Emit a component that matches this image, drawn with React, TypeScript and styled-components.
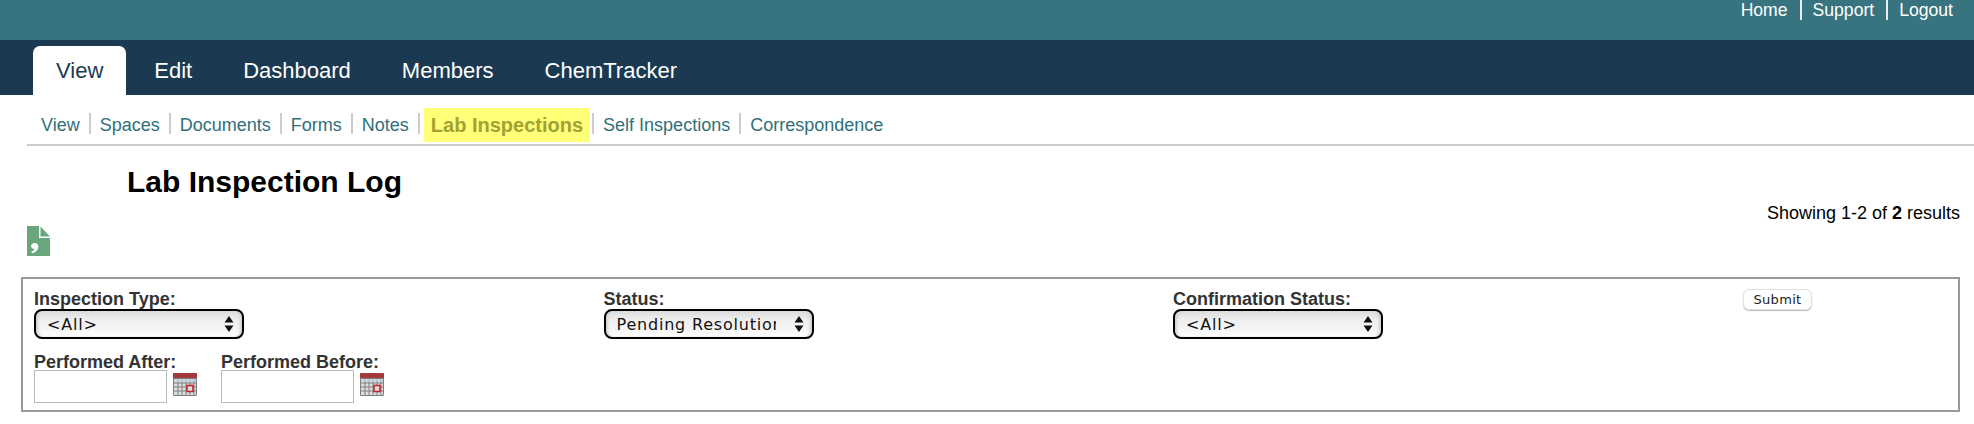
import styled, { createGlobalStyle } from 'styled-components';

const mainTabs = ['View', 'Edit', 'Dashboard', 'Members', 'ChemTracker'];
const subLinks = ['View', 'Spaces', 'Documents', 'Forms', 'Notes', 'Lab Inspections', 'Self Inspections', 'Correspondence'];

const Arrows = () => (
  <ArrowIcon width="10" height="18" viewBox="0 0 10 18">
    <path d="M5 1 9.5 7.5H.5z M5 17 .5 10.5h9z" fill="#111" />
  </ArrowIcon>
);

const DropDown = ({ value, options }: { value: string; options: string[] }) => (
  <SelectWrap>
    <Select defaultValue={value}>
      {options.map((o) => (
        <option key={o}>{o}</option>
      ))}
    </Select>
    <Arrows />
  </SelectWrap>
);

const CalendarIcon = () => (
  <CalendarSvg width="24" height="23" viewBox="0 0 24 23">
    <rect x="0" y="0" width="24" height="23" rx="1.5" fill="#7d7d7d" />
    <rect x="0" y="0" width="24" height="5" rx="1" fill="#a33a3a" />
    <rect x="1" y="6" width="22" height="16" fill="#dcdee0" />
    <path d="M1 10h22M1 14h22M1 18h22M5 6v16M9 6v16M13 6v16M17 6v16M21 6v16" stroke="#808080" strokeWidth="1" />
    <rect x="1" y="6" width="22" height="3" fill="#c4d3e2" opacity="0.6" />
    <rect x="14" y="12.500" width="6" height="6" fill="#ddd" stroke="#c0282c" strokeWidth="1.6" />
  </CalendarSvg>
);

const DateField = ({ label }: { label: string }) => (
  <DateGroup>
    <DateLabel>{label}</DateLabel>
    <DateRow>
      <DateInput type="text" />
      <CalendarIcon />
    </DateRow>
  </DateGroup>
);

const App = () => (
  <>
    <GlobalStyle />
    <TopBar>
      <TopLink>Home</TopLink>
      <TopLink>Support</TopLink>
      <TopLink>Logout</TopLink>
    </TopBar>
    <MainNav>
      {mainTabs.map((t, i) => (
        <MainTab key={t} $active={i === 0}>
          {t}
        </MainTab>
      ))}
    </MainNav>
    <SubNav>
      {subLinks.map((l) => (
        <SubLink key={l} $active={l === 'Lab Inspections'}>
          {l}
        </SubLink>
      ))}
    </SubNav>
    <Title>Lab Inspection Log</Title>
    <ResultsRow>
      <svg width="23" height="30" viewBox="0 0 23 30">
        <path d="M0 0H12V12H23V30H0z" fill="#6aa67c" />
        <path d="M13.500 .5 23 10.500H13.500z" fill="#6aa67c" />
        <path d="M4 20.500a3.700 3.700 0 1 1 7.300 1c-.5 2.800-3 5-6.300 5.800l-.8-1.500c1.600-.6 2.800-1.500 3.300-2.800A3.700 3.700 0 0 1 4 20.500z" fill="#fff" />
      </svg>
      <Results>
        Showing 1-2 of <b>2</b> results
      </Results>
    </ResultsRow>
    <FilterBox>
      <div>
        <FieldLabel>Inspection Type:</FieldLabel>
        <DropDown value="<All>" options={['<All>']} />
      </div>
      <div>
        <FieldLabel>Status:</FieldLabel>
        <DropDown value="Pending Resolution" options={['Pending Resolution']} />
      </div>
      <div>
        <FieldLabel>Confirmation Status:</FieldLabel>
        <DropDown value="<All>" options={['<All>']} />
      </div>
      <div>
        <SubmitButton>Submit</SubmitButton>
      </div>
      <DateFields>
        <DateField label="Performed After:" />
        <DateField label="Performed Before:" />
      </DateFields>
    </FilterBox>
  </>
);

const GlobalStyle = createGlobalStyle`
  body {
    margin: 0;
    background: #fff;
    font-family: "Liberation Sans", Arial, sans-serif;
  }
`;
const TopBar = styled.div`
  height: 40px;
  background: #38747f;
  display: flex;
  justify-content: flex-end;
  align-items: flex-start;
  padding-right: 21px;
`;
const TopLink = styled.a`
  color: #fff;
  font-size: 17.6px;
  line-height: 20px;
  padding: 0 12px 0 11px;
  border-right: 2px solid #e8eef0;
  &:last-child {
    border-right: 0;
    padding-right: 0;
  }
`;
const MainNav = styled.nav`
  height: 55px;
  box-sizing: border-box;
  background: #1b3a52;
  display: flex;
  align-items: flex-end;
  gap: 5px;
  padding-left: 33px;
`;
const MainTab = styled.a<{ $active?: boolean }>`
  height: 49px;
  line-height: 50px;
  padding: 0 23px;
  font-size: 22px;
  color: ${({ $active }) => ($active ? '#1b3a52' : '#fff')};
  background: ${({ $active }) => ($active ? '#fff' : 'transparent')};
  border-radius: 7px 7px 0 0;
`;
const SubNav = styled.nav`
  margin: 13px 0 0 27px;
  width: 1947px;
  box-sizing: border-box;
  height: 38px;
  border-bottom: 2px solid #ccc;
  display: flex;
  align-items: flex-start;
  padding-left: 4px;
`;
const SubLink = styled.a<{ $active?: boolean }>`
  font-size: ${({ $active }) => ($active ? '20px' : '18px')};
  height: 34px;
  line-height: 34px;
  padding: 0 ${({ $active }) => ($active ? '7px' : '10px')};
  margin-right: ${({ $active }) => ($active ? '3px' : '0')};
  margin-left: ${({ $active }) => ($active ? '5px' : '0')};
  color: ${({ $active }) => ($active ? '#a2a234' : '#2f6f7c')};
  font-weight: ${({ $active }) => ($active ? 'bold' : 'normal')};
  background: ${({ $active }) => ($active ? '#ffff78' : 'transparent')};
  position: relative;
  &:not(:last-child)::after {
    content: '';
    position: absolute;
    right: ${({ $active }) => ($active ? '-4px' : '-1px')};
    top: 5px;
    height: 21px;
    width: 2px;
    background: #ccc;
  }
`;
const Title = styled.h1`
  margin: 16px 0 0 127px;
  font-size: 30px;
  line-height: 40px;
  color: #000;
`;
const ResultsRow = styled.div`
  display: flex;
  justify-content: space-between;
  align-items: flex-start;
  padding: 0 14px 0 27px;
  height: 75px;
  & > svg {
    margin-top: 24px;
  }
`;
const Results = styled.div`
  font-size: 18px;
  line-height: 20px;
  margin-top: 1px;
  color: #000;
`;
const FilterBox = styled.div`
  margin-left: 21px;
  width: 1939px;
  height: 135px;
  box-sizing: border-box;
  border: 2px solid #999;
  padding: 11px 0 0 11px;
  display: grid;
  grid-template-columns: 569.5px 569.5px 569.5px 1fr;
  align-content: start;
`;
const FieldLabel = styled.div`
  font-size: 18px;
  font-weight: bold;
  color: #333;
  line-height: 19px;
`;
const DateLabel = styled(FieldLabel)`
  line-height: 15px;
  margin-top: 4px;
`;
const SelectWrap = styled.div`
  position: relative;
  width: 210px;
  height: 30px;
`;
const Select = styled.select`
  appearance: none;
  width: 100%;
  height: 100%;
  box-sizing: border-box;
  border: 2px solid #000;
  border-radius: 8px;
  padding: 0 36px 0 11px;
  font-family: "DejaVu Sans", sans-serif;
  font-size: 16px;
  letter-spacing: 0.8px;
  color: #111;
  background: linear-gradient(#dcdcdc 0%, #efefef 35%, #f5f5f5 70%, #ffffff 100%);
  box-shadow: inset 3px 0 3px -1px #d0d0d0, inset -3px 0 3px -1px #d0d0d0;
`;
const ArrowIcon = styled.svg`
  position: absolute;
  right: 10px;
  top: 6px;
  pointer-events: none;
`;
const SubmitButton = styled.button`
  width: 69px;
  height: 21px;
  padding: 0;
  margin: -1px 0 0 0.5px;
  display: block;
  background: #fff;
  border: 1px solid #e2e2e2;
  border-radius: 6px;
  box-shadow: 0 1px 1px #bbb;
  font-family: "DejaVu Sans", sans-serif;
  font-size: 13px;
  letter-spacing: 0.3px;
  color: #222;
`;
const DateFields = styled.div`
  grid-column: 1 / -1;
  display: flex;
  margin-top: 12px;
`;
const DateGroup = styled.div`
  width: 187px;
`;
const DateRow = styled.div`
  display: flex;
  align-items: flex-start;
  gap: 6px;
`;
const DateInput = styled.input`
  width: 133px;
  height: 33px;
  box-sizing: border-box;
  border: 1px solid #bbb;
  padding: 0 4px;
  margin: 0;
`;
const CalendarSvg = styled.svg`
  margin-top: 3px;
`;

export default App;
